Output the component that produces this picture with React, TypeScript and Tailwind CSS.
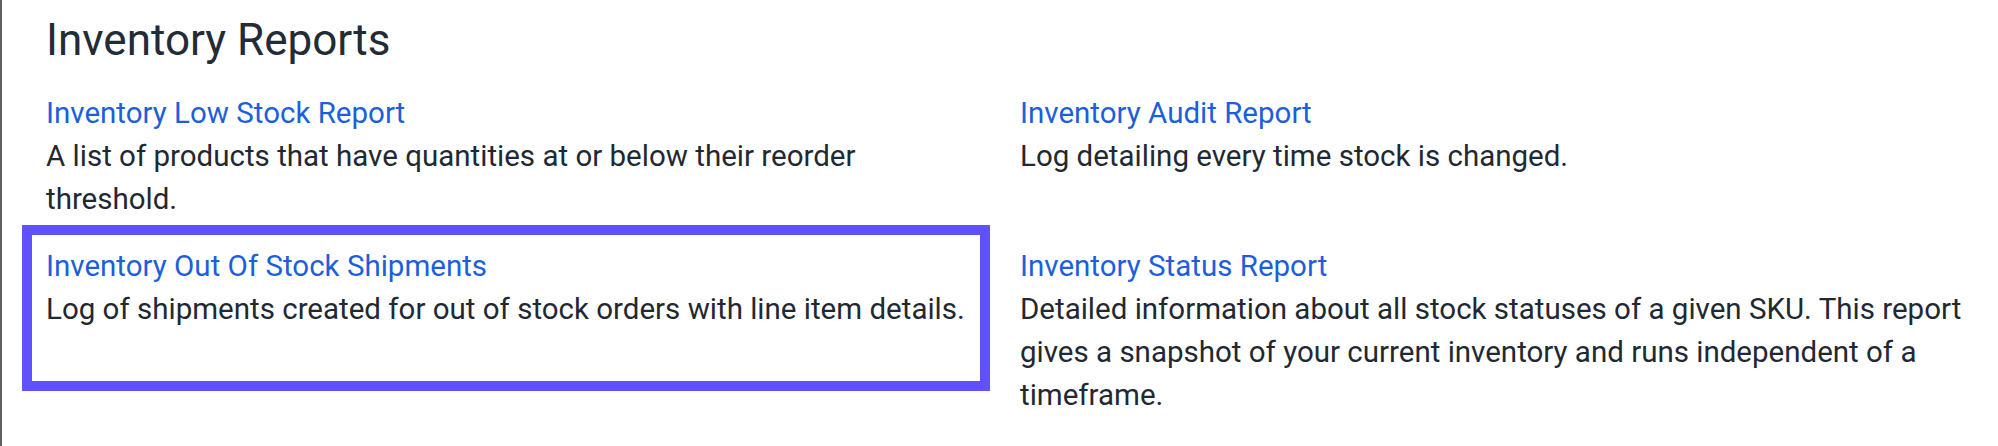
import React from "react";

type Report = { title: string; desc: string; highlight?: boolean };

const reports: Report[] = [
  {
    title: "Inventory Low Stock Report",
    desc: "A list of products that have quantities at or below their reorder threshold.",
  },
  {
    title: "Inventory Audit Report",
    desc: "Log detailing every time stock is changed.",
  },
  {
    title: "Inventory Out Of Stock Shipments",
    desc: "Log of shipments created for out of stock orders with line item details.",
    highlight: true,
  },
  {
    title: "Inventory Status Report",
    desc: "Detailed information about all stock statuses of a given SKU. This report gives a snapshot of your current inventory and runs independent of a timeframe.",
  },
];

export default function App() {
  return (
    <div className="min-h-[446px] bg-white border-l-[2px] border-[#5f5f5f] pl-[44px] pt-[13px] font-['Roboto',_'Liberation_Sans',_sans-serif]">
      <h1 className="text-[44px] leading-[54px] font-normal text-[#222b36]">Inventory Reports</h1>
      <div className="mt-[24px] grid grid-cols-[942px_952px] gap-x-[32px] gap-y-[23px]">
        {reports.map((r) => (
          <div key={r.title} className="relative">
            {r.highlight && (
              <span className="pointer-events-none absolute left-[-24px] top-[-19px] h-[166px] w-[968px] border-[10px] border-[#5f51fd]" />
            )}
            <a href="#" className="block text-[29.5px] leading-[44px] text-[#1d5fdb]">
              {r.title}
            </a>
            <p className="text-[29.5px] leading-[43px] text-[#1f2933]">{r.desc}</p>
          </div>
        ))}
      </div>
    </div>
  );
}
